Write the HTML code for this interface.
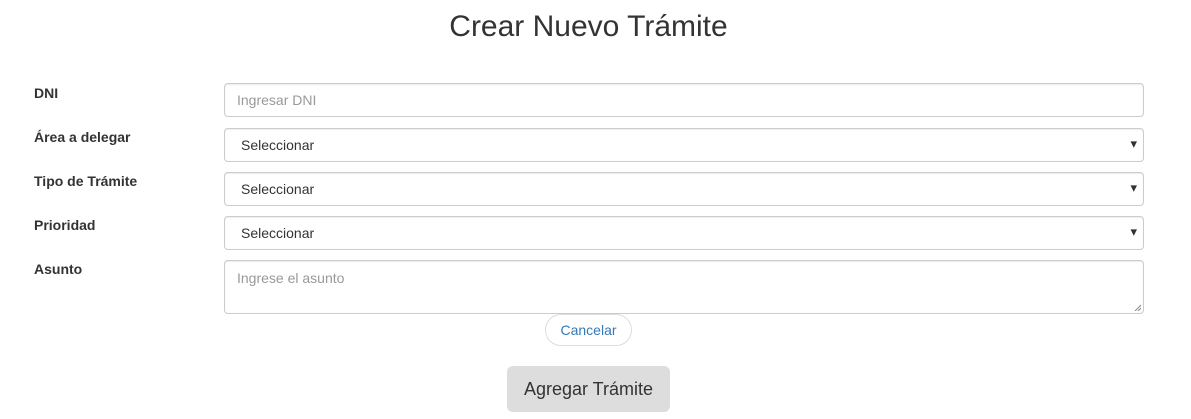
<!DOCTYPE html>
<html><head><meta charset="utf-8"><style>
body{margin:0;width:1191px;height:419px;background:#fff;font-family:"Liberation Sans",sans-serif;color:#333;position:relative;overflow:hidden}
h1{position:absolute;left:0;width:1177px;top:9px;margin:0;text-align:center;font-weight:400;font-size:30px;line-height:36px;color:#333}
.l{position:absolute;left:34px;font-weight:bold;font-size:14px}
.f{position:absolute;left:224px;width:920px;border:1px solid #ccc;border-radius:4px;box-sizing:border-box;font-size:14px;box-shadow:inset 0 1px 1px rgba(0,0,0,.075)}
.f span{position:absolute;left:12px}
.f .a{position:absolute;left:auto;right:6px;font-size:13px;color:#333}
</style></head><body>
<h1>Crear Nuevo Trámite</h1>
<div class="l" style="top:85px">DNI</div>
<div class="f" style="top:83px;height:34px"><span style="top:8px;color:#999">Ingresar DNI</span></div>
<div class="l" style="top:129px">Área a delegar</div>
<div class="f" style="top:128px;height:34px"><span style="top:8px;left:16px">Seleccionar</span><span class="a" style="top:7px">▾</span></div>
<div class="l" style="top:173px">Tipo de Trámite</div>
<div class="f" style="top:172px;height:34px"><span style="top:8px;left:16px">Seleccionar</span><span class="a" style="top:7px">▾</span></div>
<div class="l" style="top:217px">Prioridad</div>
<div class="f" style="top:216px;height:34px"><span style="top:8px;left:16px">Seleccionar</span><span class="a" style="top:7px">▾</span></div>
<div class="l" style="top:261px">Asunto</div>
<div class="f" style="top:260px;height:54px"><span style="top:9px;color:#999">Ingrese el asunto</span><svg style="position:absolute;right:2px;bottom:2px" width="7" height="7"><path d="M1 7L7 1M4 7L7 4" stroke="#888" stroke-width="1"/></svg></div>
<div style="position:absolute;left:545px;top:314px;width:87px;height:32px;border:1px solid #ddd;border-radius:16px;box-sizing:border-box;text-align:center;line-height:30px;font-size:14px;color:#337ab7">Cancelar</div>
<div style="position:absolute;left:507px;top:366px;width:163px;height:46px;background:#ddd;border-radius:6px;text-align:center;line-height:46px;font-size:18px;color:#333">Agregar Trámite</div>
</body></html>
